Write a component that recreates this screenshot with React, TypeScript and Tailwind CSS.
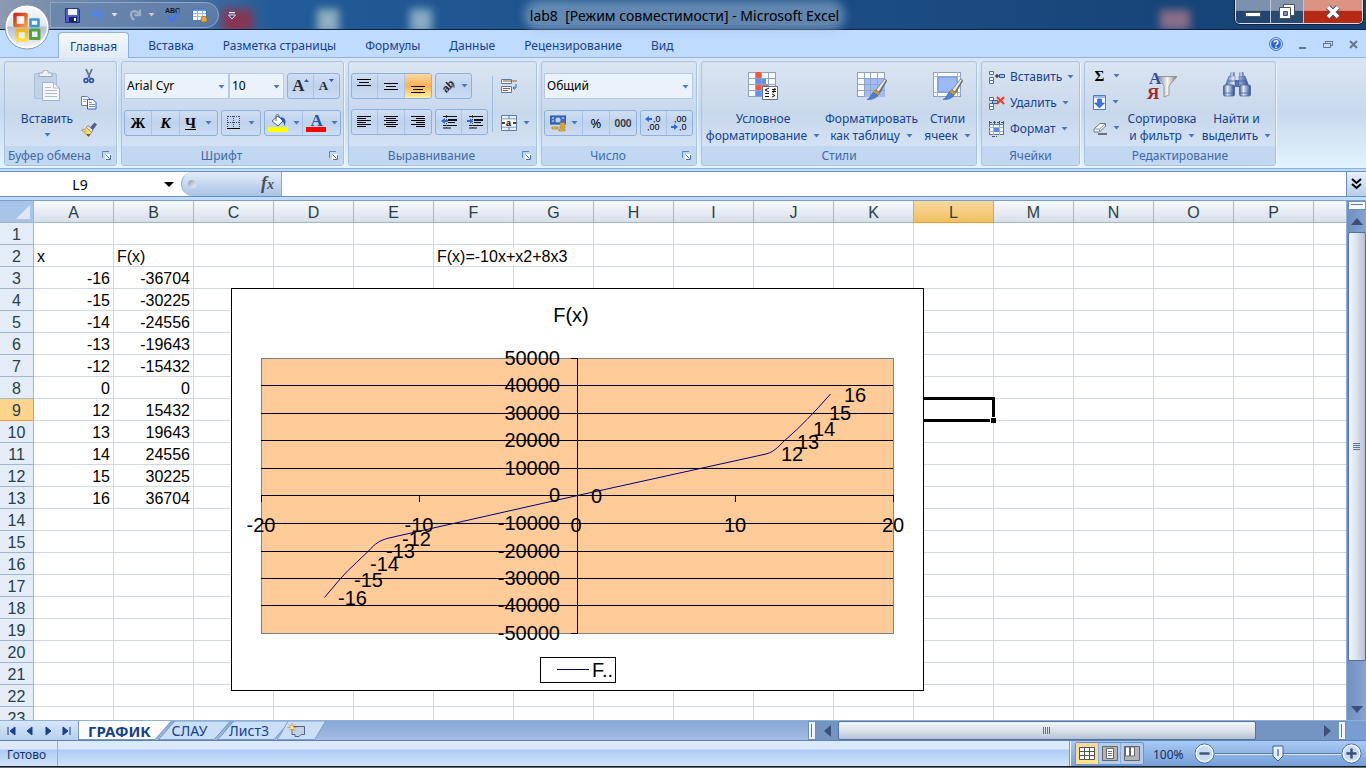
import React from "react";

type Kids = { children?: React.ReactNode };

const Caret = ({ className = "", fill = "#4779b5" }: { className?: string; fill?: string }) => (
  <svg width="7" height="4" viewBox="0 0 7 4" className={`shrink-0 ${className}`} aria-hidden="true">
    <path d="M.5 0h6L3.500 3.500z" fill={fill} />
  </svg>
);

const Launcher = () => (
  <svg width="9" height="9" viewBox="0 0 9 9" aria-hidden="true">
    <path d="M0.500 7V0.500H7" stroke="#5f86b5" fill="none" />
    <path d="M3 3h6v6H3z" fill="#fff" />
    <path d="M3.500 3.500l4 4M8.500 4v4.500H4" stroke="#4b73a5" fill="none" />
  </svg>
);

const Group = ({ title, width, launcher, children }: Kids & { title: string; width: string; launcher?: boolean }) => (
  <section
    className={`${width} flex shrink-0 flex-col overflow-hidden rounded-[3px] border border-[#a6c3e0] bg-linear-to-b from-[#dae5f2] via-[#c8d8ec] to-[#d9e7f7] shadow-[1px_1px_0_#ecf5fd]`}
  >
    <div className="flex flex-1 px-[2px]">{children}</div>
    <div className="flex h-[19px] items-center bg-[#c1d8f0] text-[#3e6aaa]">
      <span className="flex-1 text-center whitespace-nowrap">{title}</span>
      {launcher && (
        <button aria-label={`${title}: параметры`} className="mr-[5px] ml-[8px]">
          <Launcher />
        </button>
      )}
    </div>
  </section>
);

const BtnSet = ({ children }: Kids) => (
  <div className="flex h-[26px] divide-x divide-[#a9c4e6] overflow-hidden rounded-[3px] border border-[#8db0dc] bg-linear-to-b from-[#d0dff2] via-[#bfd3ed] to-[#cbdcf2]">
    {children}
  </div>
);

const Tool = ({ label, w, active, children }: Kids & { label: string; w: string; active?: boolean }) => (
  <button
    aria-label={label}
    className={`${w} flex items-center justify-center gap-[5px] ${active ? "bg-linear-to-b from-[#fbd6a2] via-[#fdb252] to-[#fff0a0]" : ""}`}
  >
    {children}
  </button>
);

const Combo = ({ label, value, w }: { label: string; value: string; w: string }) => (
  <div className={`${w} relative h-[26px] border border-[#b3cbe8] bg-[#eaf2fb]`}>
    <select aria-label={label} className="h-full w-full appearance-none bg-transparent pl-[2px] text-black outline-none">
      <option>{value}</option>
    </select>
    <Caret className="pointer-events-none absolute top-[11px] right-[3px]" />
  </div>
);

const Lines = ({ d }: { d: string }) => (
  <svg width="15" height="16" viewBox="0 0 15 16" aria-hidden="true" shapeRendering="crispEdges">
    <path d={d} stroke="#000" fill="none" />
  </svg>
);

const PasteIcon = () => (
  <svg width="28" height="32" viewBox="0 0 28 32" aria-hidden="true">
    <rect x="1.500" y="3.500" width="22" height="25" rx="1.500" fill="#c3d2e6" stroke="#a9bfda" />
    <path d="M6 6.500h13V3h-3.500a3 3 0 0 0-6 0H6z" fill="#eef3f9" stroke="#93a9c4" />
    <path d="M9.500 12.500h11l6 5.500v12.500h-17z" fill="#f5f8fc" stroke="#9fb2cb" />
    <path d="M20.500 12.500v5.500h6M12 17.500h6M12 20.500h12M12 23.500h12M12 26.500h12" stroke="#aabbd2" fill="none" />
  </svg>
);

const CutIcon = () => (
  <svg width="12" height="15" viewBox="0 0 12 15" aria-hidden="true">
    <path d="M3 0l4 9M9 0L5 9" stroke="#65758d" strokeWidth="1.800" fill="none" />
    <circle cx="3" cy="11.500" r="1.900" fill="none" stroke="#2b57a8" strokeWidth="1.700" />
    <circle cx="8.500" cy="11.500" r="1.900" fill="none" stroke="#2b57a8" strokeWidth="1.700" />
  </svg>
);

const CopyIcon = () => (
  <svg width="16" height="14" viewBox="0 0 16 14" aria-hidden="true">
    <path d="M.5.500h6l2.500 2.500v6.500H.5z" fill="#fff" stroke="#5a80bd" />
    <path d="M2 3.500h4M2 5.500h3" stroke="#88a6d4" />
    <path d="M6.500 3.500h5.500l3 3v6.500H6.500z" fill="#fff" stroke="#345fa8" />
    <path d="M8 6.500h3M8 8.500h6M8 10.500h6" stroke="#6c90ca" />
  </svg>
);

const BrushIcon = () => (
  <svg width="16" height="15" viewBox="0 0 16 15" aria-hidden="true">
    <path d="M9 6l4.500-5 2 1.500L11.500 8z" fill="#4f6186" stroke="#35466c" strokeWidth=".6" />
    <path d="M7 3.500l5 4.500-1.500 2.500L5.500 5.500z" fill="#e3e7ee" stroke="#6a7488" strokeWidth=".8" />
    <path d="M5.500 5.500l5 5C9 12.500 8.500 14 7.500 14.500L.5 8C3 8 4.500 7 5.500 5.500z" fill="#f6dc80" stroke="#a9842b" strokeWidth=".8" />
    <path d="M5 12l2.500 2.500L9.500 12z" fill="#6b5a24" />
    <path d="M3 10l3-1.500" stroke="#c39a3a" strokeWidth=".7" />
  </svg>
);

const TableIcon = ({ kind }: { kind: "cond" | "table" | "cell" }) => (
  <svg width="32" height="30" viewBox="0 0 32 30" aria-hidden="true">
    <rect x="1.500" y="1.500" width="27" height="24" fill="#f8fafd" stroke="#8aa0bf" />
    {kind === "cond" && (
      <>
        <path d="M8 1h6v6H8zM8 13h13v6H8z" fill="#ee5744" />
        <path d="M8 7h11v6H8zM8 19h6v6H8z" fill="#6290ea" />
      </>
    )}
    {kind === "table" && <path d="M8 7h21v19H8z" fill="#9fbcf7" />}
    {kind === "cell" ? (
      <>
        <path d="M1 5.500h28M1 21.500h28M5.500 1v25M25.500 1v25" stroke="#a7b7ce" />
        <path d="M6 6h19v15H6z" fill="#9bbaf7" stroke="#6d93dc" />
      </>
    ) : (
      <path d="M1 7.500h28M1 13.500h28M1 19.500h28M8.500 1v25M14.500 1v25M21.500 1v25" stroke="#8ea5c8" fill="none" />
    )}
    {kind === "cond" ? (
      <>
        <path d="M15.500 15.500h15v13h-15z" fill="#fff" stroke="#5d7086" />
        <path d="M22 17l-4 2 4 2M18 22.500h4M18 25.500h4M25 18.500h4M25 20.500h4M28 17l-2 5M25 23l3 1.500-3 1.500" stroke="#111" fill="none" />
      </>
    ) : (
      <>
        <path d="M28.500 8l2 1-7 13-3.500-3z" fill="#e9e9e9" stroke="#777" strokeWidth=".8" />
        <path d="M30 9l1 1-7 12-1.500-1z" fill="#6c6c6c" />
        <path d="M19.500 18.500l4.500 3-2 3-5-3z" fill="#c99545" stroke="#8e6425" strokeWidth=".5" />
        <path d="M17 21.500l5 3c-2 3-7 4.500-11 4 3-1 4-5 6-7z" fill="#4f7fd0" stroke="#3b62ad" strokeWidth=".6" />
      </>
    )}
  </svg>
);

const BigButton = ({ icon, a, b, w }: { icon: React.ReactNode; a: string; b: string; w: string }) => (
  <button className={`${w} flex flex-col items-center pt-[9px] whitespace-nowrap text-[#15428b]`}>
    <span className="flex h-[39px] items-start justify-center">{icon}</span>
    <span className="leading-[17px]">{a}</span>
    <span className="flex items-center gap-[6px] leading-[17px]">
      {b}
      <Caret />
    </span>
  </button>
);

const CellsIcon = ({ kind }: { kind: "ins" | "del" | "fmt" }) =>
  kind === "fmt" ? (
    <svg width="17" height="16" viewBox="0 0 17 16" aria-hidden="true">
      <rect x="1.500" y="3.500" width="14" height="10" fill="#f5f8fd" stroke="#5f7391" />
      <path d="M1 6.500h14M1 10.500h14M5.500 4v10M11.500 4v10" stroke="#a3b3ca" />
      <path d="M6 7h5v4H6z" fill="#5b8bea" />
      <path d="M1 1.500h15M1.500 0v3M6.500 0v3M11.500 0v3M15.500 0v3M4 15.500h5" stroke="#46566e" strokeDasharray="3 1" />
    </svg>
  ) : (
    <svg width="17" height="15" viewBox="0 0 17 15" aria-hidden="true">
      <path d="M1.500 1.500h4v3h-4zM1.500 7.500h4v3h-4zM1.500 10.500h4v3h-4z" fill="#fff" stroke="#566f93" />
      {kind === "ins" ? (
        <>
          <path d="M11.500 4.500h5v3h-5z" fill="#a8c8f4" stroke="#34578e" />
          <path d="M7 6h4M9 4v4" stroke="#111" />
        </>
      ) : (
        <>
          <path d="M4.500 4.500h5v3h-5z" fill="#a8c8f4" stroke="#34578e" />
          <path d="M9 1l7 7M16 1L9 8" stroke="#ef3d22" strokeWidth="2" />
        </>
      )}
    </svg>
  );

const Binoculars = () => (
  <svg width="30" height="28" viewBox="0 0 30 28" aria-hidden="true">
    <defs>
      <linearGradient id="bino">
        <stop offset="0" stopColor="#3a5896" />
        <stop offset=".35" stopColor="#e2ecfa" />
        <stop offset="1" stopColor="#2f4b8b" />
      </linearGradient>
    </defs>
    <path d="M12 9h6v7h-6z" fill="#5873aa" />
    <path d="M7 5h6v11H3l2-6zM17 5h6l2 5 2 6H17z" fill="url(#bino)" stroke="#3f5d9b" strokeWidth=".5" />
    <rect x="8.500" y="1" width="4" height="4" rx="1" fill="url(#bino)" />
    <rect x="17.500" y="1" width="4" height="4" rx="1" fill="url(#bino)" />
    <rect x="1.500" y="14" width="11" height="11" rx="1.500" fill="url(#bino)" stroke="#32508f" strokeWidth=".6" />
    <rect x="17.500" y="14" width="11" height="11" rx="1.500" fill="url(#bino)" stroke="#32508f" strokeWidth=".6" />
    <path d="M6 10h7M17 10h7M2 22h10M18 22h10" stroke="#40609f" strokeWidth=".8" />
  </svg>
);

const SortIcon = () => (
  <svg width="32" height="32" viewBox="0 0 32 32" aria-hidden="true">
    <defs>
      <linearGradient id="funnel">
        <stop offset="0" stopColor="#8b8b8b" />
        <stop offset=".5" stopColor="#f5f5f5" />
        <stop offset="1" stopColor="#7a7a7a" />
      </linearGradient>
    </defs>
    <path d="M12 5.500h19l-8 9.500v9l-5 2V15z" fill="url(#funnel)" stroke="#8a8a8c" strokeWidth=".8" />
    <text x="3" y="13" fontFamily="Liberation Serif, serif" fontWeight="bold" fontSize="17" fill="#2d4fa5">А</text>
    <text x="1" y="28" fontFamily="Liberation Serif, serif" fontWeight="bold" fontSize="17" fill="#9b2d2d">Я</text>
  </svg>
);

const Orb = () => (
  <svg width="46" height="46" viewBox="0 0 46 46" aria-hidden="true">
    <defs>
      <linearGradient id="orb" x2="0" y2="1">
        <stop offset="0" stopColor="#fbfcfe" />
        <stop offset=".48" stopColor="#dfe4ee" />
        <stop offset=".5" stopColor="#b3bed1" />
        <stop offset="1" stopColor="#f7f9fc" />
      </linearGradient>
      <linearGradient id="oRed" x2="1" y2="1"><stop stopColor="#c92d16" /><stop offset="1" stopColor="#f99a39" /></linearGradient>
      <linearGradient id="oYel" x2="0" y2="1"><stop stopColor="#f7b418" /><stop offset="1" stopColor="#ffdc45" /></linearGradient>
    </defs>
    <circle cx="23" cy="23" r="22" fill="url(#orb)" stroke="#8795ae" />
    <circle cx="23" cy="23" r="20.500" fill="none" stroke="#fff" strokeWidth="1.500" />
    <path d="M11 10.500h11v11H11z" fill="#fff" fillOpacity=".6" stroke="url(#oRed)" strokeWidth="3.500" strokeLinejoin="round" />
    <path d="M26.500 15.500h8v6.500h-8z" fill="#fff" fillOpacity=".6" stroke="#3a97d3" strokeWidth="2.600" strokeLinejoin="round" />
    <path d="M13 26.500h9.500V36H13z" fill="#fff" fillOpacity=".6" stroke="url(#oYel)" strokeWidth="3.500" strokeLinejoin="round" />
    <path d="M26.500 26h8.500v8.500h-8.500z" fill="#fff" fillOpacity=".6" stroke="#52a143" strokeWidth="3" strokeLinejoin="round" />
  </svg>
);

const QuickAccess = () => (
  <div className="flex h-[26px] items-center rounded-r-[13px] border border-[#8fa5c4] bg-linear-to-b from-[#6a84ab]/80 to-[#6685ad]/60 pr-[10px] pl-[14px]">
    <button aria-label="Сохранить" className="w-[26px]">
      <svg width="15" height="15" viewBox="0 0 15 15">
        <path d="M.5.500h13l1 1v13H.5z" fill="#4d5cc9" stroke="#27318a" />
        <path d="M3 1h9v6H3z" fill="#eef2fc" /><path d="M4 9h8v5H4z" fill="#1c2463" /><path d="M9 10h2v3H9z" fill="#fff" />
      </svg>
    </button>
    <button aria-label="Отменить" className="w-[20px]">
      <svg width="14" height="15" viewBox="0 0 14 15"><path d="M2 1.500v5.500h5.500M2.500 7C5 1.500 11.500 2 11 7c-.4 3-2.500 5-5 6.500" fill="none" stroke="#4f86ec" strokeWidth="2.300" /></svg>
    </button>
    <Caret className="mr-[10px]" fill="#dbe5f2" />
    <button aria-label="Вернуть" className="w-[20px]">
      <svg width="14" height="15" viewBox="0 0 14 15"><path d="M12 1.500v5.500H6.500M11.500 7C9 1.500 2.500 2 3 7c.4 3 2 4 3 5" fill="none" stroke="#9fb0c6" strokeWidth="2.300" /></svg>
    </button>
    <Caret className="mr-[10px]" fill="#d3c9c6" />
    <button aria-label="Орфография" className="w-[27px]">
      <svg width="16" height="16" viewBox="0 0 16 16">
        <text x="0" y="6" fontSize="7" fontWeight="bold" fontFamily="Liberation Sans, sans-serif" fill="#10172c">ABC</text>
        <path d="M3 9l4 5 7-9" fill="none" stroke="#4577ea" strokeWidth="2.600" />
      </svg>
    </button>
    <button aria-label="Таблица">
      <svg width="16" height="15" viewBox="0 0 16 15">
        <path d="M.5.500h14v12H.5z" fill="#fff" stroke="#4a78b8" /><path d="M1 1h13v2H1z" fill="#5e90d6" />
        <path d="M1 5.500h13M1 8.500h13M5.500 3v9M10.500 3v9" stroke="#9eb6d6" />
        <path d="M9 10l3-2 3 2v4H9z" fill="#e3ad3f" stroke="#8c641b" strokeWidth=".7" />
      </svg>
    </button>
  </div>
);

const WindowButtons = () => (
  <div className="flex h-[24px] overflow-hidden rounded-b-[5px] border border-t-0 border-[#d5dde8] shadow-[0_0_0_1px_#12233d]">
    <button aria-label="Свернуть" className="flex w-[35px] items-center justify-center border-r border-[#b9c6d6] bg-linear-to-b from-[#7b91ad] from-45% to-[#22456f] to-50%">
      <span className="mt-[6px] h-[5px] w-[16px] rounded-[1px] border border-[#4a5364] bg-white" />
    </button>
    <button aria-label="Восстановить" className="flex w-[33px] items-center justify-center border-r border-[#b9c6d6] bg-linear-to-b from-[#8797ae] from-45% to-[#2b4a72] to-50%">
      <svg width="18" height="17" viewBox="0 0 18 17">
        <path d="M5.500 1.500h11v11h-11z" fill="#fff" stroke="#4a5364" />
        <path d="M1.500 4.500h11v11h-11z" fill="#fff" stroke="#4a5364" /><path d="M5.500 8.500h4v4h-4z" fill="#7d8fa8" stroke="#4a5364" />
      </svg>
    </button>
    <button aria-label="Закрыть" className="flex w-[58px] items-center justify-center bg-linear-to-b from-[#dc9384] from-45% to-[#b52a14] to-50%">
      <svg width="16" height="14" viewBox="0 0 16 14">
        <path d="M3 2l10 10M13 2L3 12" stroke="#4a5364" strokeWidth="5.500" /><path d="M3 2l10 10M13 2L3 12" stroke="#fff" strokeWidth="3.500" />
      </svg>
    </button>
  </div>
);

const TABS = ["Главная", "Вставка", "Разметка страницы", "Формулы", "Данные", "Рецензирование", "Вид"];

const Ribbon = () => (
  <div className="flex h-[111px] items-start overflow-hidden border-b border-[#8db2dc] bg-linear-to-b from-[#d9e5f3] via-[#c8d9ee] to-[#e2f4fe] pt-[3px] pr-[4px] pl-[4px]">
    <div className="flex h-[105px] gap-[4px]">
      <Group title="Буфер обмена" width="w-[113px]" launcher>
        <button className="flex w-[74px] flex-col items-center pt-[8px] pl-[6px] text-[#15428b]">
          <PasteIcon />
          <span className="mt-[8px] leading-[17px]">Вставить</span>
          <Caret className="mt-[6px]" />
        </button>
        <div className="flex w-[16px] flex-col items-center gap-[12px] pt-[7px]">
          <button aria-label="Вырезать"><CutIcon /></button>
          <button aria-label="Копировать"><CopyIcon /></button>
          <button aria-label="Формат по образцу"><BrushIcon /></button>
        </div>
      </Group>
      <Group title="Шрифт" width="w-[223px]" launcher>
        <div className="flex flex-col gap-[11px] pt-[11px]">
          <div className="flex">
            <Combo label="Шрифт" value="Arial Cyr" w="w-[105px]" />
            <Combo label="Размер" value="10" w="w-[55px] mr-[3px]" />
            <BtnSet>
              <Tool label="Увеличить размер шрифта" w="w-[26px]">
                <span className="font-[Liberation_Serif,serif] text-[17px] font-bold text-[#2b2b2b]">A</span>
                <svg width="5" height="3" viewBox="0 0 5 3" className="-ml-[6px] mb-[12px]"><path d="M0 3h5L2.500 0z" fill="#2f5a9c" /></svg>
              </Tool>
              <Tool label="Уменьшить размер шрифта" w="w-[25px]">
                <span className="font-[Liberation_Serif,serif] text-[13px] font-bold text-[#2b2b2b]">A</span>
                <svg width="5" height="3" viewBox="0 0 5 3" className="-ml-[4px] mb-[12px]"><path d="M0 0h5L2.500 3z" fill="#2f5a9c" /></svg>
              </Tool>
            </BtnSet>
          </div>
          <div className="flex gap-[3px]">
            <BtnSet>
              <Tool label="Полужирный" w="w-[27px]"><span className="font-[Liberation_Serif,serif] text-[15px] font-bold text-black">Ж</span></Tool>
              <Tool label="Курсив" w="w-[28px]"><span className="font-[Liberation_Serif,serif] text-[15px] font-bold text-black italic">К</span></Tool>
              <Tool label="Подчеркнутый" w="w-[37px]">
                <span className="mr-[4px] font-[Liberation_Serif,serif] text-[15px] font-bold text-black underline">Ч</span>
                <Caret />
              </Tool>
            </BtnSet>
            <BtnSet>
              <Tool label="Границы" w="w-[38px]">
                <svg width="14" height="14" viewBox="0 0 14 14" className="mr-[2px]" shapeRendering="crispEdges">
                  <path d="M1 .5h12M1 6.500h12M.5 0v12M6.500 0v12M12.500 0v12" stroke="#445" strokeDasharray="1 1" /><path d="M0 12.500h13" stroke="#000" />
                </svg>
                <Caret />
              </Tool>
            </BtnSet>
            <BtnSet>
              <Tool label="Цвет заливки" w="w-[38px]">
                <svg width="20" height="18" viewBox="0 0 20 18">
                  <path d="M4 7l6-5 5 5-5 5z" fill="#fff" stroke="#4b648c" /><path d="M8 7V2c0-2 3-2 3 0v2" fill="none" stroke="#4b648c" />
                  <path d="M12 3.500c5-1 7 4 4.500 8.500-1-4-1.500-5-4.500-8.500z" fill="#2d5cb5" /><path d="M0 13h20v5H0z" fill="#ff0" />
                </svg>
                <Caret />
              </Tool>
              <Tool label="Цвет текста" w="w-[37px]">
                <svg width="20" height="18" viewBox="0 0 20 18">
                  <text x="4.500" y="12" fontSize="17" fontWeight="bold" fontFamily="Liberation Serif, serif" fill="#2d5397">A</text><path d="M0 13h20v5H0z" fill="red" />
                </svg>
                <Caret />
              </Tool>
            </BtnSet>
          </div>
        </div>
      </Group>
      <Group title="Выравнивание" width="w-[189px]" launcher>
        <div className="flex w-[137px] flex-col gap-[10px] pt-[11px]">
          <div className="flex gap-[3px]">
            <BtnSet>
              <Tool label="По верхнему краю" w="w-[26px]"><Lines d="M0 1.500h14M2 4.500h10M0 7.500h14" /></Tool>
              <Tool label="По середине" w="w-[27px]"><Lines d="M0 5.500h14M2 8.500h10M0 11.500h14" /></Tool>
              <Tool label="По нижнему краю" w="w-[26px]" active><Lines d="M0 8.500h14M2 11.500h10M0 14.500h14" /></Tool>
            </BtnSet>
            <BtnSet>
              <Tool label="Ориентация" w="w-[35px]">
                <svg width="16" height="15" viewBox="0 0 16 15">
                  <text x="2" y="12" transform="rotate(-45 7 8)" fontSize="11" fontWeight="bold" fontFamily="Liberation Sans, sans-serif" fill="#222">ab</text>
                  <path d="M6 14l8-8M14 9V6h-3" stroke="#7d5068" fill="none" />
                </svg>
                <Caret />
              </Tool>
            </BtnSet>
          </div>
          <div className="flex gap-[3px]">
            <BtnSet>
              <Tool label="По левому краю" w="w-[26px]"><Lines d="M0 2.500h14M0 4.500h9M0 6.500h14M0 8.500h9M0 10.500h14M0 12.500h9" /></Tool>
              <Tool label="По центру" w="w-[27px]"><Lines d="M0 2.500h14M2 4.500h10M0 6.500h14M2 8.500h10M0 10.500h14M2 12.500h10" /></Tool>
              <Tool label="По правому краю" w="w-[26px]"><Lines d="M0 2.500h14M5 4.500h9M0 6.500h14M5 8.500h9M0 10.500h14M5 12.500h9" /></Tool>
            </BtnSet>
            <BtnSet>
              <Tool label="Уменьшить отступ" w="w-[26px]">
                <svg width="16" height="14" viewBox="0 0 16 14"><path d="M2 1.500h14M7 7.500h7M2 10.500h14M2 13h8" stroke="#111" /><path d="M7 5h9" stroke="#111" strokeWidth="2" /><path d="M5.500 0v14" stroke="#444" strokeDasharray="1 1" /><path d="M0 6l4-3v2h3v2H4v2z" fill="#2f69d6" /></svg>
              </Tool>
              <Tool label="Увеличить отступ" w="w-[25px]">
                <svg width="16" height="14" viewBox="0 0 16 14"><path d="M2 1.500h14M7 7.500h7M2 10.500h14M2 13h8" stroke="#111" /><path d="M7 5h9" stroke="#111" strokeWidth="2" /><path d="M5.500 0v14" stroke="#444" strokeDasharray="1 1" /><path d="M6 6L3 3v2H0v2h3v2z" fill="#2f69d6" /></svg>
              </Tool>
            </BtnSet>
          </div>
        </div>
        <div className="mt-[14px] mr-[8px] ml-[4px] h-[56px] w-px bg-[#9dbbdd]" />
        <div className="flex flex-col gap-[21px] pt-[16px]">
          <button aria-label="Перенос текста">
            <svg width="16" height="16" viewBox="0 0 16 16">
              <path d="M.5 1.500h10v4H.5zM.5 8.500h10v6H.5z" fill="#f4f8fd" stroke="#5d7da8" /><path d="M2 3h14M2 10.500h7M2 12.500h5" stroke="#9d5a33" />
              <path d="M15 6v4h-3M13.500 8.500L12 10l1.500 1.500" stroke="#3b6499" fill="none" />
            </svg>
          </button>
          <button aria-label="Объединить" className="flex items-center gap-[6px]">
            <svg width="16" height="16" viewBox="0 0 16 16">
              <path d="M.5.500h15v15H.5z" fill="#e9f1fb" stroke="#5d7da8" /><path d="M0 4h16M0 12h16M8 0v4M8 12v4" stroke="#5d7da8" /><path d="M1 4.500h14v7H1z" fill="#fff" />
              <text x="5" y="11" fontSize="9" fontWeight="bold" fontFamily="Liberation Sans, sans-serif">a</text><path d="M1 8h3M12 8h3" stroke="#000" strokeWidth="1.500" />
            </svg>
            <Caret />
          </button>
        </div>
      </Group>
      <Group title="Число" width="w-[156px]" launcher>
        <div className="flex flex-col gap-[11px] pt-[11px]">
          <Combo label="Числовой формат" value="Общий" w="w-[149px]" />
          <div className="flex gap-[3px]">
            <BtnSet>
              <Tool label="Денежный формат" w="w-[38px]">
                <svg width="16" height="17" viewBox="0 0 16 17">
                  <path d="M0 1h16v8H0z" fill="#3d6fc5" stroke="#2a4c92" /><circle cx="8" cy="5" r="2.500" fill="#bdd1f5" /><path d="M2 3h2M2 6h2M12 3h2" stroke="#dbe7fb" />
                  <path d="M10 8h5v2h-5zM10 11h5v2h-5zM9 14h6v2H9zM2 12h6v2H2z" fill="#f5bd2d" stroke="#a6741b" strokeWidth=".6" />
                </svg>
                <Caret />
              </Tool>
              <Tool label="Процентный формат" w="w-[27px]"><span className="text-[13px] text-black">%</span></Tool>
              <Tool label="Формат с разделителями" w="w-[26px]"><span className="text-[10px] font-semibold text-[#333]">000</span></Tool>
            </BtnSet>
            <BtnSet>
              <Tool label="Увеличить разрядность" w="w-[26px]">
                <svg width="17" height="16" viewBox="0 0 17 16" fontFamily="Liberation Sans, sans-serif" fontSize="9"><text x="8" y="7">,0</text><text x="2" y="15">,00</text><path d="M0 4l4-3v2h3v2H4v2z" fill="#2f69d6" /></svg>
              </Tool>
              <Tool label="Уменьшить разрядность" w="w-[25px]">
                <svg width="17" height="16" viewBox="0 0 17 16" fontFamily="Liberation Sans, sans-serif" fontSize="9"><text x="3" y="7">,00</text><text x="8" y="15">,0</text><path d="M7 12L3 9v2H0v2h3v2z" fill="#2f69d6" /></svg>
              </Tool>
            </BtnSet>
          </div>
        </div>
      </Group>
      <Group title="Стили" width="w-[276px]">
        <BigButton icon={<TableIcon kind="cond" />} a="Условное" b="форматирование" w="w-[118px]" />
        <BigButton icon={<TableIcon kind="table" />} a="Форматировать" b="как таблицу" w="w-[99px]" />
        <BigButton icon={<TableIcon kind="cell" />} a="Стили" b="ячеек" w="w-[53px]" />
      </Group>
      <Group title="Ячейки" width="w-[99px]">
        <div className="flex flex-col gap-[6px] pt-[5px] pl-[4px] text-[#15428b]">
          <button className="flex h-[20px] items-center gap-[5px]"><CellsIcon kind="ins" />Вставить<Caret /></button>
          <button className="flex h-[20px] items-center gap-[5px]"><CellsIcon kind="del" />Удалить<Caret /></button>
          <button className="flex h-[20px] items-center gap-[5px]"><CellsIcon kind="fmt" />Формат<Caret /></button>
        </div>
      </Group>
      <Group title="Редактирование" width="w-[192px]">
        <div className="flex w-[35px] flex-col gap-[6px] pt-[4px] pl-[6px]">
          <button aria-label="Сумма" className="flex h-[20px] items-center gap-[7px]"><span className="w-[13px] text-center font-[Liberation_Serif,serif] text-[15px] font-bold text-black">Σ</span><Caret /></button>
          <button aria-label="Заполнить" className="flex h-[20px] items-center gap-[6px]">
            <svg width="13" height="15" viewBox="0 0 13 15"><path d="M.5.500h12v14H.5z" fill="#f3f7fd" stroke="#5478b5" /><path d="M1 1h11v2H1z" fill="#9bb8e6" /><path d="M4.500 4h4v4h3l-5 5-5-5h3z" fill="#3c74e0" stroke="#2450a8" strokeWidth=".6" /></svg>
            <Caret />
          </button>
          <button aria-label="Очистить" className="flex h-[20px] items-center gap-[6px]">
            <svg width="14" height="13" viewBox="0 0 14 13"><path d="M1 7l6-5.500h5.500V4l-6 6H1z" fill="#fff" stroke="#66758e" /><path d="M1 7h5.500l6-5.500M6.500 7v3" stroke="#8796ac" fill="none" /><path d="M5 12h9" stroke="#000" /></svg>
            <Caret />
          </button>
        </div>
        <BigButton icon={<SortIcon />} a="Сортировка" b="и фильтр" w="w-[80px]" />
        <BigButton icon={<Binoculars />} a="Найти и" b="выделить" w="w-[69px]" />
      </Group>
    </div>
  </div>
);

const COLS = "ABCDEFGHIJKLMNOP".split("");
const DATA: Record<number, [string, string]> = {
  2: ["x", "F(x)"],
  3: ["-16", "-36704"],
  4: ["-15", "-30225"],
  5: ["-14", "-24556"],
  6: ["-13", "-19643"],
  7: ["-12", "-15432"],
  8: ["0", "0"],
  9: ["12", "15432"],
  10: ["13", "19643"],
  11: ["14", "24556"],
  12: ["15", "30225"],
  13: ["16", "36704"],
};
const ROWS = Array.from({ length: 23 }, (_, i) => i + 1);

const headBg = "bg-linear-to-b from-[#f8fafc] to-[#d7dfe9]";

const Cell = ({ row, col }: { row: number; col: number }) => {
  const text = col < 2 ? DATA[row]?.[col] : row === 2 && col === 5 ? "F(x)=-10x+x2+8x3" : undefined;
  const numeric = col < 2 && row > 2;
  const selected = row === 9 && col === 11;
  return (
    <td
      className={`h-[22px] border-r border-b border-[#d0d7e5] px-[3px] pt-[2px] pb-0 leading-[19px] whitespace-nowrap ${numeric ? "text-right" : ""} ${selected ? "relative" : ""}`}
    >
      {text && <span className="relative bg-white">{text}</span>}
      {selected && (
        <>
          <span className="absolute -inset-[2px] border-[3px] border-black" />
          <span className="absolute -right-[3px] -bottom-[3px] h-[6px] w-[6px] border-t border-l border-white bg-black" />
        </>
      )}
    </td>
  );
};

const Sheet = () => (
  <table className="w-full table-fixed border-separate border-spacing-0 font-['Liberation_Sans',Arial,sans-serif] text-[16px] text-black">
    <colgroup>
      <col className="w-[34px]" />
      {COLS.map((c) => (
        <col key={c} className="w-[80px]" />
      ))}
      <col />
    </colgroup>
    <thead>
      <tr>
        <th className="h-[22px] border-r border-b border-[#9eb6ce] bg-[#a9c4e9] p-0 align-bottom leading-none">
          <svg width="14" height="14" viewBox="0 0 14 14" className="mr-[3px] mb-[3px] ml-auto" aria-hidden="true"><path d="M14 0v14H0z" fill="#dfe7f2" /></svg>
        </th>
        {COLS.map((c) => (
          <th
            key={c}
            className={`h-[22px] border-r border-b px-0 pt-[2px] pb-0 leading-[19px] font-normal text-[#273f47] ${c === "L" ? "border-[#f29536] bg-linear-to-b from-[#f9d99f] to-[#f1c15f]" : `border-[#9eb6ce] ${headBg}`}`}
          >
            {c}
          </th>
        ))}
        <th className={`h-[22px] border-b border-[#9eb6ce] p-0 ${headBg}`} />
      </tr>
    </thead>
    <tbody>
      {ROWS.map((r) => (
        <tr key={r}>
          <th
            className={`h-[22px] border-r border-b px-0 pt-[2px] pb-0 leading-[19px] font-normal text-[#273f47] ${r === 9 ? "border-[#f29536] bg-[#ffd58d]" : "border-[#9eb6ce] bg-[#e4ecf7]"}`}
          >
            {r}
          </th>
          {COLS.map((c, i) => (
            <Cell key={c} row={r} col={i} />
          ))}
          <td className="border-b border-[#d0d7e5] p-0" />
        </tr>
      ))}
    </tbody>
  </table>
);

const GRID_Y: [number, string][] = [
  [70, "50000"], [97, "40000"], [125, "30000"], [152, "20000"], [180, "10000"], [207, "0"],
  [235, "-10000"], [263, "-20000"], [290, "-30000"], [317, "-40000"], [345, "-50000"],
];
const GRID_X: [number, string][] = [[30, "-20"], [188, "-10"], [345, "0"], [504, "10"], [662, "20"]];
const POINTS: [number, number, string][] = [
  [107, 317, "-16"], [123, 299, "-15"], [139, 283, "-14"], [155, 270, "-13"], [171, 258, "-12"], [360, 215, "0"],
  [550, 173, "12"], [566, 161, "13"], [582, 148, "14"], [598, 132, "15"], [613, 114, "16"],
];

const Chart = () => (
  <svg width="693" height="403" viewBox="0 0 693 403" className="absolute top-[87px] left-[231px]" fontFamily="'Liberation Sans', Arial, sans-serif" fontSize="20" role="img" aria-label="F(x)">
    <rect x=".5" y=".5" width="692" height="402" fill="#fff" stroke="#000" />
    <rect x="30.500" y="70.500" width="632" height="275" fill="#ffcc99" stroke="#808080" />
    <g stroke="#000" shapeRendering="crispEdges">
      {GRID_Y.slice(1, -1).map(([y]) => (
        <line key={y} x1="30" x2="662" y1={y + 0.5} y2={y + 0.5} />
      ))}
      <line x1="346.500" x2="346.500" y1="70" y2="346" />
      <path d="M340 70.500h6M340 345.500h6M30.500 207v7M188.500 207v7M504.500 207v7M662.500 207v7" />
    </g>
    <path
      d="M93.500 309.500L109.500 290.500Q116 283 125.500 274.500L137.500 263C144 256 148 252.500 158 250L346.500 207.500L535 166C545 163.500 549 156 556 150.500Q575 134 599.500 106"
      fill="none"
      stroke="#000080"
    />
    <text x="340" y="34" textAnchor="middle">F(x)</text>
    {GRID_Y.map(([y, t]) => (
      <text key={t} x="329" y={y + 7} textAnchor="end">{t}</text>
    ))}
    {GRID_X.map(([x, t]) => (
      <text key={t} x={x} y="244" textAnchor="middle">{t}</text>
    ))}
    {POINTS.map(([x, y, t]) => (
      <text key={t} x={x} y={y}>{t}</text>
    ))}
    <rect x="309.500" y="369.500" width="75" height="25" fill="#fff" stroke="#000" />
    <path d="M326 381.500h32" stroke="#000080" />
    <text x="361" y="389">F..</text>
  </svg>
);

const SheetTab = ({ label, w }: { label: React.ReactNode; w: string }) => (
  <button className={`${w} relative -ml-[14px] flex h-[19px] items-center justify-center`}>
    <svg viewBox="0 0 74 19" preserveAspectRatio="none" className="absolute inset-0 h-full w-full" aria-hidden="true">
      <path d="M0 18.500h57L73.500 0H17C10 7 6 14 0 18.500z" fill="#cadef6" stroke="#7696c1" />
    </svg>
    <span className="relative pr-[10px]">{label}</span>
  </button>
);

const BottomBar = () => (
  <div className="flex h-[20px] shrink-0 items-stretch border-t border-[#8eb0dd] bg-linear-to-b from-[#88a8d6] to-[#a3bce2]">
    <div className="flex w-[79px] items-center justify-around border-r border-[#7696c1] bg-linear-to-b from-[#d7e6f9] to-[#b7cfee] px-[2px]">
      {["M2 1v8M9 1v8L4 5z", "M8 1v8L3 5z", "M3 1v8l5-4z", "M9 1v8M2 1v8l5-4z"].map((d, i) => (
        <button key={d} aria-label={["Первый лист", "Предыдущий лист", "Следующий лист", "Последний лист"][i]}>
          <svg width="11" height="10" viewBox="0 0 11 10"><path d={d} fill="#15428b" stroke="#15428b" /></svg>
        </button>
      ))}
    </div>
    <div className="flex text-[14px] text-[#15428b]">
      <button className="relative z-10 flex h-[19px] w-[93px] items-center pl-[9px] text-[15px] font-bold">
        <svg viewBox="0 0 93 19" preserveAspectRatio="none" className="absolute inset-0 h-full w-full" aria-hidden="true">
          <path d="M0 0h92.500L76 18.500H0z" fill="#fff" /><path d="M92.500 0L76 18.500H0" fill="none" stroke="#7696c1" />
        </svg>
        <span className="relative">ГРАФИК</span>
      </button>
      <SheetTab label="СЛАУ" w="w-[73px]" />
      <SheetTab label="Лист3" w="w-[74px]" />
      <SheetTab
        w="w-[49px]"
        label={
          <svg width="19" height="15" viewBox="0 0 19 15" aria-label="Новый лист">
            <path d="M5 3.500h12.500v8H14l-2 2H8v-2H5z" fill="#c3d0e6" stroke="#4c6285" />
            <path d="M5 0v9M.5 4.500h9M2 1.500l6 6M8 1.500l-6 6" stroke="#e5952a" /><circle cx="5" cy="4.500" r="1.500" fill="#fff3b0" />
          </svg>
        }
      />
    </div>
    <div className="flex-1" />
    <div className="flex w-[538px] shrink-0 items-stretch bg-[#7494c2]">
      <div className="w-[8px] border border-[#6d8fbf] bg-[#f3f8fe] p-[2px]"><div className="h-full w-px bg-[#4f74aa]" /></div>
      <button aria-label="Влево" className="flex w-[22px] items-center justify-center bg-[#7494c2]"><svg width="7" height="12" viewBox="0 0 7 12"><path d="M7 0v12L0 6z" fill="#3c4f78" /></svg></button>
      <div className="flex w-[418px] items-center justify-center rounded-[2px] border border-[#54719c] bg-linear-to-b from-[#f2f4f7] via-[#dde2ea] to-[#b4c1d4]">
        <svg width="8" height="7" viewBox="0 0 8 7"><path d="M.5 0v7M2.500 0v7M4.500 0v7M6.500 0v7" stroke="#62728b" /></svg>
      </div>
      <div className="flex-1" />
      <button aria-label="Вправо" className="flex w-[22px] items-center justify-center"><svg width="7" height="12" viewBox="0 0 7 12"><path d="M0 0v12l7-6z" fill="#3c4f78" /></svg></button>
      <div className="w-[8px] border border-[#6d8fbf] bg-[#f3f8fe] p-[2px]"><div className="h-full w-px bg-[#4f74aa]" /></div>
    </div>
    <div className="w-[20px] bg-[#7a9dd0]" />
  </div>
);

const Round = ({ label, plus }: { label: string; plus?: boolean }) => (
  <button aria-label={label}>
    <svg width="21" height="21" viewBox="0 0 21 21">
      <circle cx="10.500" cy="10.500" r="9.500" fill="#c6dbf5" stroke="#4b6c9b" /><circle cx="10.500" cy="10.500" r="8.300" fill="none" stroke="#f4f9ff" strokeWidth="1.400" />
      <path d={plus ? "M5.500 10.500h10M10.500 5.500v10" : "M5.500 10.500h10"} stroke="#3d506e" strokeWidth="2.400" />
    </svg>
  </button>
);

const StatusBar = () => (
  <div className="flex h-[26px] shrink-0 items-stretch border-t border-[#5b83b8] bg-linear-to-b from-[#dbe9fa] from-30% via-[#aeccf4] via-38% to-[#d2e4fa] text-[#15305f]">
    <span className="flex w-[58px] items-center border-r border-[#8fb0dc] pt-[2px] pl-[7px]">Готово</span>
    <div className="flex-1 border-r border-[#6f98cd]" />
    <div className="flex w-[296px] items-center border-l border-[#eef5fd] bg-linear-to-b from-[#a9caf5] to-[#749fd5] pl-[4px]">
      <div className="mr-[9px] flex h-[23px] rounded-[2px] border border-[#6b93c8] bg-[#b4cdee]">
        <button aria-label="Обычный" className="flex w-[22px] items-center justify-center bg-linear-to-b from-[#fbd59a] to-[#ffe487]">
          <svg width="16" height="13" viewBox="0 0 16 13"><path d="M.5.500h15v12H.5z" fill="#fff" stroke="#555" /><path d="M0 4.500h16M0 8.500h16M5.500 0v13M10.500 0v13" stroke="#555" /></svg>
        </button>
        <button aria-label="Разметка страницы" className="flex w-[23px] items-center justify-center border-x border-[#8badd9]">
          <svg width="16" height="15" viewBox="0 0 16 15"><path d="M.5.500h15v14H.5z" fill="#b4b4b4" stroke="#666" /><path d="M4.500 2.500h7v10h-7z" fill="#fff" stroke="#666" /><path d="M6 5.500h4M6 7.500h4M6 9.500h4" stroke="#777" /></svg>
        </button>
        <button aria-label="Страничный" className="flex w-[22px] items-center justify-center">
          <svg width="16" height="15" viewBox="0 0 16 15"><path d="M.5.500h15v14H.5z" fill="#b4b4b4" stroke="#666" /><path d="M1.500 1h4v9h-4zM6.500 1h4v9h-4z" fill="#fff" stroke="#666" /></svg>
        </button>
      </div>
      <button className="w-[41px] pt-[2px] text-left">100%</button>
      <Round label="Уменьшить" />
      <div className="relative flex flex-1 items-center">
        <div className="h-[2px] w-full border-b border-[#dbe9fb] bg-[#55779f]" />
        <svg width="12" height="17" viewBox="0 0 12 17" className="absolute left-1/2 -translate-x-1/2"><path d="M1 1h10v10l-5 5-5-5z" fill="#e6f0fc" stroke="#3f6290" /><path d="M6 4v7" stroke="#7b98c0" strokeWidth="2" /></svg>
      </div>
      <Round label="Увеличить" plus />
      <span className="w-[4px]" />
    </div>
  </div>
);

export default function App() {
  return (
    <div className="flex h-screen flex-col overflow-hidden bg-[#bfdbff] font-['Noto_Sans',sans-serif] text-[12px] leading-[16px]">
      <header className="relative flex h-[30px] shrink-0 items-start border-b border-[#10233c] bg-linear-to-r from-[#8c9ab2] via-[#225b98] via-20% to-[#154072]">
        <div className="absolute inset-0 overflow-hidden" aria-hidden="true">
          <div className="absolute top-[9px] left-[222px] h-[24px] w-[31px] bg-[#9b2b42]/80 blur-[4px]" />
          <div className="absolute top-[9px] left-[317px] h-[24px] w-[22px] bg-[#a9c5c9]/80 blur-[4px]" />
          <div className="absolute top-[9px] left-[410px] h-[24px] w-[22px] bg-[#a3c2d0]/80 blur-[4px]" />
          <div className="absolute top-[10px] left-[1160px] h-[20px] w-[30px] bg-[#a9788f]/80 blur-[4px]" />
        </div>
        <div className="relative mt-[2px] ml-[50px]"><QuickAccess /></div>
        <button aria-label="Настройка панели" className="relative mt-[12px] ml-[9px]">
          <svg width="8" height="8" viewBox="0 0 8 8"><path d="M1 .5h6" stroke="#fff" strokeWidth="1.500" /><path d="M.5 3h7L4 7z" fill="#245099" stroke="#fff" strokeWidth=".8" /></svg>
        </button>
        <h1 className="relative flex-1 pt-[6px] text-center text-[14px] leading-[20px] whitespace-pre text-black">
          <span className="rounded-full bg-[#a5bdd8]/50 shadow-[0_0_8px_6px_rgba(165,189,216,.5)]">{"lab8  [Режим совместимости] - Microsoft Excel"}</span>
        </h1>
        <div className="relative mr-[3px] ml-[102px]"><WindowButtons /></div>
        <button aria-label="Кнопка Office" className="absolute top-[4px] left-[4px] z-20"><Orb /></button>
      </header>
      <nav className="flex h-[28px] shrink-0 items-end border-b border-[#8db2e3] pr-[8px] pl-[58px] text-[#15428b]">
        {TABS.map((t, i) => (
          <button
            key={t}
            className={`mr-[4px] h-[26px] pt-[3px] ${i === 0 ? "-mb-px rounded-t-[4px] border border-b-0 border-[#8db2e3] bg-linear-to-b from-[#f4f9fe] to-[#dfeaf7] px-[11px]" : "ml-[5px] px-[10px]"}`}
          >
            {t}
          </button>
        ))}
        <div className="flex flex-1 items-center justify-end gap-[16px] pb-[6px]">
          <button aria-label="Справка">
            <svg width="14" height="14" viewBox="0 0 14 14"><circle cx="7" cy="7" r="6.300" fill="#2b63d2" stroke="#3c66b0" /><circle cx="7" cy="7" r="5.500" fill="none" stroke="#dce9fc" /><path d="M5 5.500c0-2.500 4-2.500 4 0C9 7 7 7 7 8.500M7 9.500V11" stroke="#fff" strokeWidth="1.500" fill="none" /></svg>
          </button>
          <button aria-label="Свернуть книгу"><svg width="8" height="9" viewBox="0 0 8 9"><path d="M0 8h7" stroke="#6a7686" strokeWidth="2" /></svg></button>
          <button aria-label="Восстановить книгу"><svg width="10" height="9" viewBox="0 0 10 9"><path d="M2.500 3V1.500h7v4H8M.5 3.500h7v4h-7z" fill="none" stroke="#6a7686" /><path d="M2 1.500h8M0 3.500h8" stroke="#6a7686" /></svg></button>
          <button aria-label="Закрыть книгу"><svg width="9" height="9" viewBox="0 0 9 9"><path d="M1 1l7 7M8 1L1 8" stroke="#6a7686" strokeWidth="2" /></svg></button>
        </div>
      </nav>
      <Ribbon />
      <div className="mt-[2px] flex h-[26px] shrink-0 items-stretch border-y border-[#6b8fbf] bg-white text-[14px]">
        <div className="flex w-[181px] items-center">
          <input aria-label="Имя" className="w-[160px] min-w-0 bg-transparent pt-[2px] text-center outline-none" defaultValue="L9" />
          <svg width="10" height="5" viewBox="0 0 10 5" className="ml-[4px]"><path d="M0 0h10L5 5z" /></svg>
        </div>
        <div className="flex w-[101px] items-center justify-between rounded-l-[13px] border-r border-l border-[#8aa9d0] bg-linear-to-b from-[#e4edf8] to-[#a9c3e6] pr-[7px] pl-[6px]">
          <span className="h-[8px] w-[8px] rounded-full bg-linear-to-br from-[#8d9bb0] to-[#f6f9fd]" />
          <button aria-label="Вставить функцию" className="font-['Liberation_Serif',serif] text-[18px] font-bold text-[#4a4f58] italic">
            f<span className="text-[14px]">x</span>
          </button>
        </div>
        <input aria-label="Строка формул" className="min-w-0 flex-1 px-[4px] outline-none" />
        <button aria-label="Развернуть" className="flex w-[20px] items-center justify-center border-l border-[#6b8fbf] bg-linear-to-b from-[#e9f1fb] to-[#b7cdea]">
          <svg width="11" height="12" viewBox="0 0 11 12"><path d="M1 1l4.500 4L10 1M1 6l4.500 4L10 6" fill="none" stroke="#000" strokeWidth="2" /></svg>
        </button>
      </div>
      <main className="mt-[3px] flex min-h-0 flex-1 border-t border-[#7f9dc4]">
        <div className="relative min-w-0 flex-1 overflow-hidden bg-white">
          <Sheet />
          <Chart />
        </div>
        <div className="flex w-[20px] flex-col items-center border-l border-[#8fb0dc] bg-linear-to-r from-[#6f90bf] to-[#86a4cf]">
          <div className="h-[9px] w-[18px] border border-[#6d8fbf] bg-[#f8fbff] px-[2px] pt-[2px]"><div className="h-px bg-[#5f80ae]" /></div>
          <button aria-label="Вверх" className="flex h-[22px] w-full items-center justify-center"><svg width="12" height="7" viewBox="0 0 12 7"><path d="M0 7h12L6 0z" fill="#3c4f78" /></svg></button>
          <div className="flex h-[429px] w-[18px] items-center justify-center rounded-[2px] border border-[#54719c] bg-linear-to-r from-[#f2f4f7] via-[#dde2ea] to-[#b4c1d4]">
            <svg width="7" height="8" viewBox="0 0 7 8"><path d="M0 .5h7M0 2.500h7M0 4.500h7M0 6.500h7" stroke="#62728b" /></svg>
          </div>
          <div className="flex-1" />
          <button aria-label="Вниз" className="flex h-[22px] w-full items-center justify-center"><svg width="12" height="7" viewBox="0 0 12 7"><path d="M0 0h12L6 7z" fill="#3c4f78" /></svg></button>
        </div>
      </main>
      <BottomBar />
      <StatusBar />
      <footer className="h-[2px] shrink-0 border-t border-[#141c26] bg-[#5f6a72]" />
    </div>
  );
}
